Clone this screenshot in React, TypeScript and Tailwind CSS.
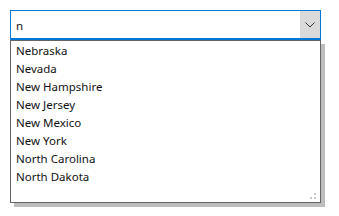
import React from "react";

const states = [
  "Nebraska",
  "Nevada",
  "New Hampshire",
  "New Jersey",
  "New Mexico",
  "New York",
  "North Carolina",
  "North Dakota",
];

export default function App() {
  return (
    <div
      className="w-[339px] h-[216px] bg-white pl-[10px] pt-[10px]"
      style={{ fontFamily: '"Noto Sans", "Open Sans", sans-serif' }}
    >
      <div className="w-[311px]">
        <div className="flex h-[30px] border border-b-2 border-[#0078d7] bg-white">
          <div className="flex-1 flex items-center pl-[5px] pt-[3px] text-[11.5px] text-[#111] leading-none">
            n
          </div>
          <div className="w-[20px] bg-[#dadada] flex items-center justify-center">
            <svg width="10" height="6" viewBox="0 0 10 6">
              <polyline
                points="0.5,0.5 5,5 9.5,0.5"
                fill="none"
                stroke="#333"
                strokeWidth="1"
              />
            </svg>
          </div>
        </div>
        <div className="relative h-[163px] border border-[#646464] bg-white shadow-[4px_4px_0_#bdbdbd]">
          <ul className="pt-[1px]">
            {states.map((s) => (
              <li
                key={s}
                className="h-[18px] flex items-center pl-[5px] text-[11.5px] text-[#111] leading-none"
              >
                {s}
              </li>
            ))}
          </ul>
          <div className="absolute right-[4px] bottom-[3px] w-[6px] h-[6px]">
            <div className="absolute right-0 top-0 w-[2px] h-[2px] bg-[#c8c8c8]" />
            <div className="absolute left-0 bottom-0 w-[2px] h-[2px] bg-[#c8c8c8]" />
            <div className="absolute right-0 bottom-0 w-[2px] h-[2px] bg-[#c8c8c8]" />
          </div>
        </div>
      </div>
    </div>
  );
}
